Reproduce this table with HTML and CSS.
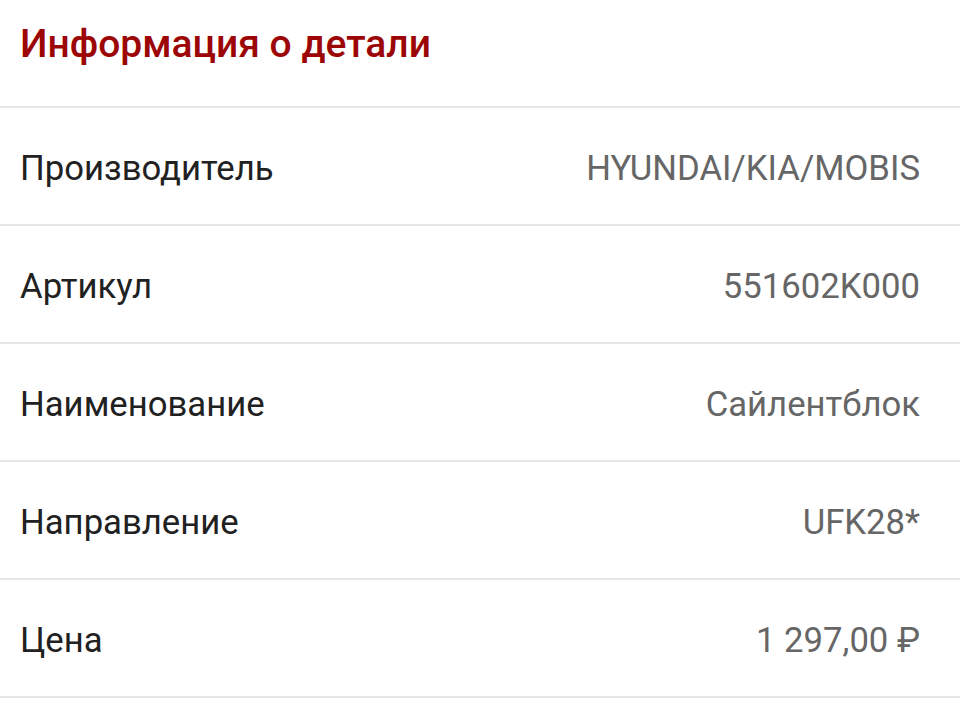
FILE: index.html
```html
<!DOCTYPE html>
<html lang="ru">
<head>
<meta charset="utf-8">
<link rel="stylesheet" href="styles.css">
</head>
<body>
<div class="page">
  <h1 class="title">Информация о детали</h1>
  <div class="row"><span class="label">Производитель</span><span class="value">HYUNDAI/KIA/MOBIS</span></div>
  <div class="row"><span class="label">Артикул</span><span class="value">551602K000</span></div>
  <div class="row"><span class="label">Наименование</span><span class="value">Сайлентблок</span></div>
  <div class="row"><span class="label">Направление</span><span class="value">UFK28*</span></div>
  <div class="row"><span class="label">Цена</span><span class="value">1 297,00 ₽</span></div>
</div>
</body>
</html>
```
FILE: styles.css
```css
html, body {
  margin: 0;
  padding: 0;
  background: #ffffff;
}
body {
  font-family: Roboto, "Noto Sans", sans-serif;
  width: 960px;
  height: 708px;
  overflow: hidden;
}
.page {
  display: flex;
  flex-direction: column;
}
.title {
  margin: 0;
  height: 108px;
  box-sizing: border-box;
  padding: 0 20px 18px;
  display: flex;
  align-items: center;
  font-size: 39px;
  font-weight: 500;
  color: #9c0606;
  border-bottom: 2px solid #e6e6e6;
}
.row {
  height: 118px;
  box-sizing: border-box;
  display: flex;
  align-items: center;
  justify-content: space-between;
  padding: 4px 40px 0 20px;
  border-bottom: 2px solid #e6e6e6;
  font-size: 34.7px;
}
.label {
  color: #212121;
}
.value {
  color: #666666;
}
```
